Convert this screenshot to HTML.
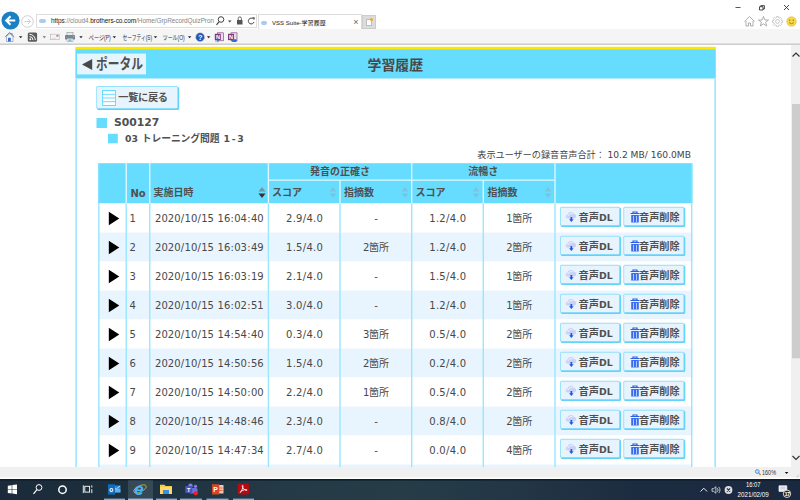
<!DOCTYPE html>
<html lang="ja"><head><meta charset="utf-8"><title>VSS Suite-学習履歴</title>
<style>
*{box-sizing:border-box;margin:0;padding:0}
html,body{width:800px;height:500px;overflow:hidden;background:#fff}
body{position:relative;font-family:"DejaVu Sans","Liberation Sans","Noto Sans CJK JP",sans-serif;color:#444;font-size:10px}
.a{position:absolute}
.t{position:absolute;white-space:nowrap;line-height:1}
.jp{font-family:"Liberation Sans","Noto Sans CJK JP",sans-serif}
.b{font-weight:bold;color:#505050}
.btn{position:absolute;background:#e8f5fe;border:1px solid #8fdcfa;border-radius:2px;box-shadow:1px 1px 0 #7fd6f7}
.cell{position:absolute;white-space:nowrap;line-height:1;font-size:10px;color:#484848;word-spacing:0.4px}
.s{margin:0 0.3px}
.p{margin:0 0.23px}
.ctr{text-align:center}
</style></head><body>

<svg class="a" style="left:0;top:0" width="800" height="500" viewBox="0 0 800 500">
<rect x="0" y="0" width="800" height="32" fill="#fff"/>
<rect x="0" y="29" width="800" height="14.5" fill="#f5f5f5"/>
<rect x="0" y="43.5" width="800" height="1.3" fill="#c2c2c2"/>
<rect x="75.400" y="46.800" width="640.400" height="2.500" fill="#ffe600"/>
<rect x="75.400" y="49.200" width="640.400" height="29.300" fill="#66dcff"/>
<rect x="75.300" y="78.500" width="1.700" height="388.500" fill="#a3e7ff"/>
<rect x="714.300" y="78.500" width="1.700" height="388.500" fill="#a3e7ff"/>
<rect x="77" y="53.600" width="69" height="20.800" fill="#e6f4fd"/>
<rect x="96.500" y="118" width="10.500" height="10" fill="#66dcff"/>
<rect x="108" y="133.800" width="9.800" height="9.500" fill="#66dcff"/>
<rect x="98.200" y="163.2" width="594.200" height="40.2" fill="#66dcff"/>
<rect x="125.55" y="163.2" width="1.4" height="40.2" fill="#dff6ff"/>
<rect x="149.05" y="163.2" width="1.4" height="40.2" fill="#dff6ff"/>
<rect x="267.7" y="163.2" width="1.4" height="40.2" fill="#dff6ff"/>
<rect x="339.3" y="180" width="1.4" height="23.4" fill="#dff6ff"/>
<rect x="411" y="163.2" width="1.4" height="40.2" fill="#dff6ff"/>
<rect x="482.6" y="180" width="1.4" height="23.4" fill="#dff6ff"/>
<rect x="554.3" y="163.2" width="1.4" height="40.2" fill="#dff6ff"/>
<rect x="268.400" y="179.500" width="286.600" height="1.3" fill="#dff6ff"/>
<rect x="98.200" y="203.5" width="594.200" height="29" fill="#fff"/>
<rect x="98.200" y="232.5" width="594.200" height="29" fill="#e9f5fe"/>
<rect x="98.200" y="261.5" width="594.200" height="29" fill="#fff"/>
<rect x="98.200" y="290.5" width="594.200" height="29" fill="#e9f5fe"/>
<rect x="98.200" y="319.5" width="594.200" height="29" fill="#fff"/>
<rect x="98.200" y="348.5" width="594.200" height="29" fill="#e9f5fe"/>
<rect x="98.200" y="377.5" width="594.200" height="29" fill="#fff"/>
<rect x="98.200" y="406.5" width="594.200" height="29" fill="#e9f5fe"/>
<rect x="98.200" y="435.5" width="594.200" height="29" fill="#fff"/>
<rect x="98.200" y="464.500" width="594.200" height="2.500" fill="#e9f5fe"/>
<rect x="98.15" y="203.4" width="1.4" height="263.6" fill="#9ae6ff"/>
<rect x="125.55" y="203.4" width="1.4" height="263.6" fill="#9ae6ff"/>
<rect x="149.05" y="203.4" width="1.4" height="263.6" fill="#9ae6ff"/>
<rect x="267.7" y="203.4" width="1.4" height="263.6" fill="#9ae6ff"/>
<rect x="339.3" y="203.4" width="1.4" height="263.6" fill="#9ae6ff"/>
<rect x="411" y="203.4" width="1.4" height="263.6" fill="#9ae6ff"/>
<rect x="482.6" y="203.4" width="1.4" height="263.6" fill="#9ae6ff"/>
<rect x="554.3" y="203.4" width="1.4" height="263.6" fill="#9ae6ff"/>
<rect x="691" y="203.4" width="1.4" height="263.6" fill="#9ae6ff"/>
<rect x="98.150" y="163.2" width="1.4" height="40.2" fill="#7fe1ff"/>
<rect x="691" y="163.2" width="1.4" height="40.2" fill="#7fe1ff"/>
<rect x="791" y="45" width="9" height="422" fill="#f0f0f0"/>
<rect x="792" y="104" width="8" height="254.300" fill="#cdcdcd"/>
<rect x="0" y="467" width="800" height="11" fill="#f0f0f0"/>
<rect x="0" y="477.500" width="800" height="1.500" fill="#ffffff"/>
</svg>
<svg class="a" style="left:0.5px;top:10.5px" width="19" height="19" viewBox="0 0 20 20"><circle cx="10" cy="10" r="9.5" fill="#1b7fc4"/><path d="M15 10H6M10 5.5L5.5 10L10 14.5" stroke="#fff" stroke-width="2.2" fill="none"/></svg>
<svg class="a" style="left:21px;top:15px" width="13" height="13" viewBox="0 0 13 13"><circle cx="6.5" cy="6.5" r="5.8" fill="#fff" stroke="#c4c4c4" stroke-width="0.8"/><path d="M3.5 6.5H9M7 4L9.5 6.5L7 9" stroke="#d0d0d0" stroke-width="1" fill="none"/></svg>
<div class="a" style="left:36px;top:14.300px;width:221px;height:13.400px;border:1px solid #dedede;background:#fff"></div>
<div class="a" style="left:39px;top:19px;width:7px;height:4px;border-radius:3px;background:#a9cbf2"></div>
<div class="t" style="left:51px;top:18.400px;font-size:6.45px;font-family:'Liberation Sans',sans-serif;color:#858585;letter-spacing:-0.05px"><span style="color:#222">https</span>://cloud4.<span style="color:#111">brothers-co.com</span>/Home/GrpRecordQuizPron</div>
<svg class="a" style="left:215px;top:15px" width="45" height="12" viewBox="0 0 45 12"><circle cx="6" cy="4.5" r="2.8" fill="none" stroke="#444" stroke-width="1"/><path d="M4 6.8L1.5 9.8" stroke="#444" stroke-width="1.2"/><path d="M13 5.5h3.5l-1.75 2z" fill="#444"/><rect x="22" y="5" width="5.5" height="4.5" fill="#555"/><path d="M23.2 5V3.5a1.6 1.6 0 0 1 3.2 0V5" fill="none" stroke="#555" stroke-width="0.9"/><path d="M38.5 4.2A2.9 2.9 0 1 0 39 7" fill="none" stroke="#444" stroke-width="1"/><path d="M37 2.2h2.6v2.6z" fill="#444"/></svg>
<div class="a" style="left:258px;top:14px;width:104px;height:15px;border:1px solid #dcdcdc;border-bottom:none;background:#fff"></div>
<div class="a" style="left:260.500px;top:20.500px;width:6.500px;height:4px;border-radius:3px;background:#a9cbf2"></div>
<div class="t jp" style="left:272px;top:19.700px;font-size:6.05px;color:#222">VSS Suite-学習履歴</div>
<div class="t" style="left:353.300px;top:18px;font-size:9px;color:#666;font-family:'Liberation Sans',sans-serif">×</div>
<div class="a" style="left:361.5px;top:15px;width:14px;height:13.5px;background:#dcdcdc;border:1px solid #cdcdcd"></div>
<div class="a" style="left:366px;top:19px;width:6px;height:7px;background:#fff;border:1px solid #bdbdbd"></div>
<div class="a" style="left:370px;top:18px;width:3px;height:3px;border-radius:2px;background:#f5a623"></div>
<svg class="a" style="left:730px;top:0" width="70" height="16" viewBox="0 0 70 16"><path d="M5.5 7.5h5" stroke="#444" stroke-width="0.9"/><path d="M29.500 6.700h3.500v3.300h-3.500z" fill="none" stroke="#222" stroke-width="0.800"/><path d="M30.800 6.700V5.600h3.600V9h-1.400" fill="none" stroke="#222" stroke-width="0.800"/><path d="M54 5l5 5M59 5l-5 5" stroke="#333" stroke-width="0.9"/></svg>
<svg class="a" style="left:743px;top:15px" width="56" height="13" viewBox="0 0 56 13"><path d="M1.5 6.5L6.5 1.5L11.5 6.5M3 6v5h2.5V8h2v3H10V6" fill="none" stroke="#9a9a9a" stroke-width="0.8"/><path d="M20.500 1.500L21.900 5h3.600l-2.900 2.300 1.100 3.700-3.200-2.200-3.200 2.200 1.100-3.700L15.500 5h3.600z" fill="none" stroke="#9a9a9a" stroke-width="0.8"/><path d="M38.25 5.42L39.53 5.64L39.53 7.36L38.25 7.58L37.91 8.39L38.66 9.44L37.44 10.66L36.39 9.91L35.58 10.25L35.36 11.53L33.64 11.53L33.42 10.25L32.61 9.91L31.56 10.66L30.34 9.44L31.09 8.39L30.75 7.58L29.47 7.36L29.47 5.64L30.75 5.42L31.09 4.61L30.34 3.56L31.56 2.34L32.61 3.09L33.42 2.75L33.64 1.47L35.36 1.47L35.58 2.75L36.39 3.09L37.44 2.34L38.66 3.56L37.91 4.61z" fill="none" stroke="#b3b3b3" stroke-width="0.7" stroke-linejoin="round"/><circle cx="34.500" cy="6.500" r="1.900" fill="none" stroke="#b3b3b3" stroke-width="0.700"/><circle cx="48.500" cy="6.500" r="4.800" fill="#f7d84a" stroke="#d8b52a" stroke-width="0.5"/><circle cx="46.800" cy="5.200" r="0.600" fill="#6b5a10"/><circle cx="50.200" cy="5.200" r="0.600" fill="#6b5a10"/><path d="M46 7.600q2.500 2.200 5 0" fill="none" stroke="#6b5a10" stroke-width="0.600"/></svg>
<svg class="a" style="left:0;top:28px" width="260" height="18" viewBox="0 28 260 18" font-family="Liberation Sans, Noto Sans CJK JP, sans-serif">
<path d="M5.300 36.800L9.700 32.600L14.200 36.800" fill="none" stroke="#5b6f8f" stroke-width="1"/><path d="M6.500 36.500v5h6.500v-5L9.700 33.600z" fill="#f3f6fb" stroke="#7d8da8" stroke-width="0.600"/><rect x="8" y="37.800" width="2.800" height="3.700" fill="#2f6fc4"/><rect x="11.300" y="33" width="1.200" height="2" fill="#7d8da8"/>
<path d="M19 36.300h3.400l-1.700 2z" fill="#222"/>
<rect x="27.800" y="32.500" width="9.300" height="9.300" rx="1.500" fill="#5a5a5a"/><circle cx="30.300" cy="39.300" r="0.950" fill="#fff"/><path d="M29.500 36.600a3.500 3.500 0 0 1 3.500 3.500M29.500 34.300a5.800 5.800 0 0 1 5.800 5.800" fill="none" stroke="#fff" stroke-width="1"/>
<path d="M42.6 36.300h3.400l-1.700 2z" fill="#777"/>
<rect x="50.500" y="34.200" width="8.700" height="5.500" fill="#f4f4f4" stroke="#b5b5b5" stroke-width="0.600"/><rect x="56.300" y="35" width="2.200" height="1.600" fill="#e26a6a"/><path d="M51.800 38.300h4" stroke="#ccc" stroke-width="0.600"/>
<rect x="67" y="32.700" width="6" height="3" fill="#e9edf1" stroke="#7c838b" stroke-width="0.500"/><rect x="65" y="35" width="10" height="4.600" rx="0.600" fill="#7f868e"/><rect x="67" y="38.300" width="6" height="3.200" fill="#fff" stroke="#7c838b" stroke-width="0.500"/><rect x="68.300" y="39.500" width="3.300" height="1.200" fill="#2aa7df"/><rect x="73" y="36" width="1" height="0.800" fill="#7fe07f"/>
<path d="M79.3 36.300h3.400l-1.700 2z" fill="#222"/>
<text x="88.800" y="40" font-size="6.800" fill="#333" textLength="22" lengthAdjust="spacingAndGlyphs">ページ(P)</text>
<path d="M112.6 36.300h3.400l-1.700 2z" fill="#222"/>
<text x="122.500" y="40" font-size="6.800" fill="#333" textLength="29.500" lengthAdjust="spacingAndGlyphs">セーフティ(S)</text>
<path d="M153.8 36.300h3.400l-1.700 2z" fill="#222"/>
<text x="162.700" y="40" font-size="6.800" fill="#333" textLength="22" lengthAdjust="spacingAndGlyphs">ツール(O)</text>
<path d="M187.9 36.300h3.400l-1.700 2z" fill="#222"/>
<circle cx="200.100" cy="37.200" r="4.400" fill="#1f57b8" stroke="#c9c2a8" stroke-width="0.500"/><text x="198.100" y="39.800" font-size="7.300" font-weight="bold" fill="#fff">?</text>
<path d="M206.9 36.300h3.400l-1.700 2z" fill="#222"/>
<rect x="217.500" y="32.800" width="6" height="8" fill="#e9d9ee" stroke="#80397b" stroke-width="0.600"/><rect x="214.800" y="33.800" width="6" height="6.300" fill="#80397b"/><text x="215.900" y="39.100" font-size="5.600" font-weight="bold" fill="#fff">N</text><path d="M215 41h3.500M217.500 40l1.200 1-1.200 1" stroke="#2b6fd0" stroke-width="0.700" fill="none"/>
<rect x="231" y="32.800" width="6" height="8" fill="#e9d9ee" stroke="#80397b" stroke-width="0.600"/><rect x="228" y="33.800" width="6" height="6.300" fill="#80397b"/><text x="229.100" y="39.100" font-size="5.600" font-weight="bold" fill="#fff">N</text><rect x="231.500" y="39.300" width="5.500" height="2.600" rx="1.300" fill="#2b6fd0"/>
</svg>
<svg class="a" style="left:81px;top:58px" width="12" height="13" viewBox="0 0 12 13"><path d="M11.200 0.900V12.100L1 6.500z" fill="#484848"/></svg>
<div class="t jp b" style="left:96px;top:57px;font-size:14.5px;transform:scaleX(0.81);transform-origin:0 0">ポータル</div>
<div class="t jp b" style="left:367.5px;top:58.5px;font-size:13.9px;color:#484848">学習履歴</div>
<svg class="a" style="left:95px;top:85px" width="87" height="27" viewBox="95 85 87 27"><rect x="97" y="86.9" width="82.2" height="23" rx="1.500" fill="#62d2f8"/><rect x="96.2" y="86.1" width="81.8" height="22.6" rx="1.500" fill="#93e0fb"/><rect x="97.1" y="87" width="80.1" height="20.9" rx="0.800" fill="#e8f4fd"/></svg>
<svg class="a" style="left:101.800px;top:90px" width="14" height="16" viewBox="0 0 14 16"><rect x="0.500" y="0.500" width="13" height="15" fill="#fff" stroke="#66dcff" stroke-width="1"/><path d="M0.500 4.300h13M0.500 8h13M0.500 11.700h13" stroke="#66dcff" stroke-width="1"/></svg>
<div class="t jp b" style="left:118.300px;top:93px;font-size:10.2px;letter-spacing:-0.3px">一覧に戻る</div>
<div class="t b" style="left:114px;top:117.800px;font-size:10.8px">S00127</div>
<div class="t b" style="left:125px;top:133.800px;font-size:9.3px">03</div>
<div class="t jp b" style="left:141.800px;top:134.100px;font-size:9.8px;letter-spacing:-0.1px">トレーニング問題</div>
<div class="t b" style="left:223.500px;top:133.800px;font-size:9.3px;letter-spacing:1.7px">1-3</div>
<div class="t jp" style="right:109px;top:150.800px;font-size:9.15px;color:#444">表示ユーザーの録音音声合計： <span style="font-family:'DejaVu Sans',sans-serif;font-size:9.15px">10.2 MB/ 160.0MB</span></div>
<div class="t jp b ctr" style="left:268.400px;width:143.300px;top:166.500px;font-size:10px">発音の正確さ</div>
<div class="t jp b ctr" style="left:411.700px;width:143.300px;top:166.500px;font-size:10px">流暢さ</div>
<div class="t b" style="left:130.500px;top:188.500px;font-size:10px">No</div>
<div class="t jp b" style="left:153.500px;top:188px;font-size:10px">実施日時</div>
<div class="t jp b" style="left:272px;top:188px;font-size:10px">スコア</div>
<div class="t jp b" style="left:344px;top:188px;font-size:10px">指摘数</div>
<div class="t jp b" style="left:415.500px;top:188px;font-size:10px">スコア</div>
<div class="t jp b" style="left:487.500px;top:188px;font-size:10px">指摘数</div>
<svg class="a" style="left:257.7px;top:186px" width="8" height="13" viewBox="0 0 8 13"><path d="M0.500 5.500L4 1L7.500 5.500z" fill="#6f9aa3"/><path d="M0.500 7.500L4 12L7.500 7.500z" fill="#333"/></svg>
<svg class="a" style="left:329px;top:186px" width="8" height="13" viewBox="0 0 8 13"><path d="M0.500 5.500L4 1L7.500 5.500z" fill="#7cc3de"/><path d="M0.500 7.500L4 12L7.500 7.500z" fill="#7cc3de"/></svg>
<svg class="a" style="left:400.7px;top:186px" width="8" height="13" viewBox="0 0 8 13"><path d="M0.500 5.500L4 1L7.500 5.500z" fill="#7cc3de"/><path d="M0.500 7.500L4 12L7.500 7.500z" fill="#7cc3de"/></svg>
<svg class="a" style="left:472.3px;top:186px" width="8" height="13" viewBox="0 0 8 13"><path d="M0.500 5.500L4 1L7.500 5.500z" fill="#7cc3de"/><path d="M0.500 7.500L4 12L7.500 7.500z" fill="#7cc3de"/></svg>
<svg class="a" style="left:544px;top:186px" width="8" height="13" viewBox="0 0 8 13"><path d="M0.500 5.500L4 1L7.500 5.500z" fill="#7cc3de"/><path d="M0.500 7.500L4 12L7.500 7.500z" fill="#7cc3de"/></svg>
<svg class="a" style="left:108px;top:210.5px" width="12" height="15" viewBox="0 0 12 15"><path d="M0.800 0.800V14.200L11.300 7.500z" fill="#000"/></svg>
<div class="cell" style="left:129.500px;top:214px">1</div>
<div class="cell" style="left:155.100px;top:214px">2020<span class="s">/</span>10<span class="s">/</span>15 16<span class="s">:</span>04<span class="s">:</span>40</div>
<div class="cell ctr" style="left:268.400px;width:72px;top:214px">2<span class="p">.</span>9<span class="s">/</span>4<span class="p">.</span>0</div>
<div class="cell ctr" style="left:340px;width:72px;top:214px">-</div>
<div class="cell ctr" style="left:411.700px;width:72px;top:214px">1<span class="p">.</span>2<span class="s">/</span>4<span class="p">.</span>0</div>
<div class="cell ctr" style="left:483.300px;width:72px;top:214px">1<span class="jp" style="font-size:10px;margin-left:-0.3px">箇所</span></div>
<svg class="a" style="left:559px;top:205px" width="65" height="24" viewBox="559 205 65 24"><rect x="560.8" y="207.6" width="60.2" height="19.4" rx="1.500" fill="#62d2f8"/><rect x="560" y="206.8" width="59.8" height="19" rx="1.500" fill="#93e0fb"/><rect x="560.9" y="207.7" width="58.1" height="17.3" rx="0.800" fill="#e8f4fd"/></svg>
<svg class="a" style="left:565px;top:211.5px" width="13" height="11" viewBox="0 0 13 11"><path d="M2.300 6.600a2.100 2.100 0 0 1 0.200-4.100a3.400 3.400 0 0 1 6.300-0.700a2.450 2.450 0 0 1 0.500 4.800z" fill="#c9d2f4"/><path d="M2.600 4.300a1.500 1.500 0 0 1 1.200-1.200a2.600 2.600 0 0 1 3.600-1.300" fill="none" stroke="#f4f6ff" stroke-width="0.900"/><path d="M5.500 5h1.700v2.200h1.400L6.350 9.900L4.100 7.200h1.400z" fill="#1f55ee"/></svg>
<div class="t jp b" style="left:578.500px;top:212.5px;font-size:10.3px">音声<span style="font-family:'DejaVu Sans',sans-serif;font-size:9.3px">DL</span></div>
<svg class="a" style="left:622px;top:205px" width="66" height="24" viewBox="622 205 66 24"><rect x="624.1" y="207.6" width="61.2" height="19.4" rx="1.500" fill="#62d2f8"/><rect x="623.3" y="206.8" width="60.8" height="19" rx="1.500" fill="#93e0fb"/><rect x="624.2" y="207.7" width="59.1" height="17.3" rx="0.800" fill="#e8f4fd"/></svg>
<svg class="a" style="left:629.500px;top:211.1px" width="10" height="12" viewBox="0 0 10 12"><path d="M0.500 2.500h9M3 2.500V1h4v1.500" stroke="#2a5fe8" stroke-width="1.200" fill="none"/><path d="M1.200 4h7.600v7.500H1.200z" fill="#3a6cf0"/><path d="M3.500 5v6M6.500 5v6" stroke="#cfe0ff" stroke-width="0.800"/></svg>
<div class="t jp b" style="left:639px;top:212.5px;font-size:10.2px">音声削除</div>
<svg class="a" style="left:108px;top:239.5px" width="12" height="15" viewBox="0 0 12 15"><path d="M0.800 0.800V14.200L11.300 7.500z" fill="#000"/></svg>
<div class="cell" style="left:129.500px;top:243px">2</div>
<div class="cell" style="left:155.100px;top:243px">2020<span class="s">/</span>10<span class="s">/</span>15 16<span class="s">:</span>03<span class="s">:</span>49</div>
<div class="cell ctr" style="left:268.400px;width:72px;top:243px">1<span class="p">.</span>5<span class="s">/</span>4<span class="p">.</span>0</div>
<div class="cell ctr" style="left:340px;width:72px;top:243px">2<span class="jp" style="font-size:10px;margin-left:-0.3px">箇所</span></div>
<div class="cell ctr" style="left:411.700px;width:72px;top:243px">1<span class="p">.</span>2<span class="s">/</span>4<span class="p">.</span>0</div>
<div class="cell ctr" style="left:483.300px;width:72px;top:243px">2<span class="jp" style="font-size:10px;margin-left:-0.3px">箇所</span></div>
<svg class="a" style="left:559px;top:234px" width="65" height="24" viewBox="559 234 65 24"><rect x="560.8" y="236.6" width="60.2" height="19.4" rx="1.500" fill="#62d2f8"/><rect x="560" y="235.8" width="59.8" height="19" rx="1.500" fill="#93e0fb"/><rect x="560.9" y="236.7" width="58.1" height="17.3" rx="0.800" fill="#e8f4fd"/></svg>
<svg class="a" style="left:565px;top:240.5px" width="13" height="11" viewBox="0 0 13 11"><path d="M2.300 6.600a2.100 2.100 0 0 1 0.200-4.100a3.400 3.400 0 0 1 6.300-0.700a2.450 2.450 0 0 1 0.500 4.800z" fill="#c9d2f4"/><path d="M2.600 4.300a1.500 1.500 0 0 1 1.200-1.200a2.600 2.600 0 0 1 3.600-1.300" fill="none" stroke="#f4f6ff" stroke-width="0.900"/><path d="M5.500 5h1.700v2.200h1.400L6.350 9.900L4.100 7.200h1.400z" fill="#1f55ee"/></svg>
<div class="t jp b" style="left:578.500px;top:241.5px;font-size:10.3px">音声<span style="font-family:'DejaVu Sans',sans-serif;font-size:9.3px">DL</span></div>
<svg class="a" style="left:622px;top:234px" width="66" height="24" viewBox="622 234 66 24"><rect x="624.1" y="236.6" width="61.2" height="19.4" rx="1.500" fill="#62d2f8"/><rect x="623.3" y="235.8" width="60.8" height="19" rx="1.500" fill="#93e0fb"/><rect x="624.2" y="236.7" width="59.1" height="17.3" rx="0.800" fill="#e8f4fd"/></svg>
<svg class="a" style="left:629.500px;top:240.1px" width="10" height="12" viewBox="0 0 10 12"><path d="M0.500 2.500h9M3 2.500V1h4v1.500" stroke="#2a5fe8" stroke-width="1.200" fill="none"/><path d="M1.200 4h7.600v7.500H1.200z" fill="#3a6cf0"/><path d="M3.500 5v6M6.500 5v6" stroke="#cfe0ff" stroke-width="0.800"/></svg>
<div class="t jp b" style="left:639px;top:241.5px;font-size:10.2px">音声削除</div>
<svg class="a" style="left:108px;top:268.5px" width="12" height="15" viewBox="0 0 12 15"><path d="M0.800 0.800V14.200L11.300 7.500z" fill="#000"/></svg>
<div class="cell" style="left:129.500px;top:272px">3</div>
<div class="cell" style="left:155.100px;top:272px">2020<span class="s">/</span>10<span class="s">/</span>15 16<span class="s">:</span>03<span class="s">:</span>19</div>
<div class="cell ctr" style="left:268.400px;width:72px;top:272px">2<span class="p">.</span>1<span class="s">/</span>4<span class="p">.</span>0</div>
<div class="cell ctr" style="left:340px;width:72px;top:272px">-</div>
<div class="cell ctr" style="left:411.700px;width:72px;top:272px">1<span class="p">.</span>5<span class="s">/</span>4<span class="p">.</span>0</div>
<div class="cell ctr" style="left:483.300px;width:72px;top:272px">1<span class="jp" style="font-size:10px;margin-left:-0.3px">箇所</span></div>
<svg class="a" style="left:559px;top:263px" width="65" height="24" viewBox="559 263 65 24"><rect x="560.8" y="265.6" width="60.2" height="19.4" rx="1.500" fill="#62d2f8"/><rect x="560" y="264.8" width="59.8" height="19" rx="1.500" fill="#93e0fb"/><rect x="560.9" y="265.7" width="58.1" height="17.3" rx="0.800" fill="#e8f4fd"/></svg>
<svg class="a" style="left:565px;top:269.5px" width="13" height="11" viewBox="0 0 13 11"><path d="M2.300 6.600a2.100 2.100 0 0 1 0.200-4.100a3.400 3.400 0 0 1 6.300-0.700a2.450 2.450 0 0 1 0.500 4.800z" fill="#c9d2f4"/><path d="M2.600 4.300a1.500 1.500 0 0 1 1.200-1.200a2.600 2.600 0 0 1 3.600-1.300" fill="none" stroke="#f4f6ff" stroke-width="0.900"/><path d="M5.500 5h1.700v2.200h1.400L6.350 9.900L4.100 7.200h1.400z" fill="#1f55ee"/></svg>
<div class="t jp b" style="left:578.500px;top:270.5px;font-size:10.3px">音声<span style="font-family:'DejaVu Sans',sans-serif;font-size:9.3px">DL</span></div>
<svg class="a" style="left:622px;top:263px" width="66" height="24" viewBox="622 263 66 24"><rect x="624.1" y="265.6" width="61.2" height="19.4" rx="1.500" fill="#62d2f8"/><rect x="623.3" y="264.8" width="60.8" height="19" rx="1.500" fill="#93e0fb"/><rect x="624.2" y="265.7" width="59.1" height="17.3" rx="0.800" fill="#e8f4fd"/></svg>
<svg class="a" style="left:629.500px;top:269.1px" width="10" height="12" viewBox="0 0 10 12"><path d="M0.500 2.500h9M3 2.500V1h4v1.500" stroke="#2a5fe8" stroke-width="1.200" fill="none"/><path d="M1.200 4h7.600v7.500H1.200z" fill="#3a6cf0"/><path d="M3.500 5v6M6.500 5v6" stroke="#cfe0ff" stroke-width="0.800"/></svg>
<div class="t jp b" style="left:639px;top:270.5px;font-size:10.2px">音声削除</div>
<svg class="a" style="left:108px;top:297.5px" width="12" height="15" viewBox="0 0 12 15"><path d="M0.800 0.800V14.200L11.300 7.500z" fill="#000"/></svg>
<div class="cell" style="left:129.500px;top:301px">4</div>
<div class="cell" style="left:155.100px;top:301px">2020<span class="s">/</span>10<span class="s">/</span>15 16<span class="s">:</span>02<span class="s">:</span>51</div>
<div class="cell ctr" style="left:268.400px;width:72px;top:301px">3<span class="p">.</span>0<span class="s">/</span>4<span class="p">.</span>0</div>
<div class="cell ctr" style="left:340px;width:72px;top:301px">-</div>
<div class="cell ctr" style="left:411.700px;width:72px;top:301px">1<span class="p">.</span>2<span class="s">/</span>4<span class="p">.</span>0</div>
<div class="cell ctr" style="left:483.300px;width:72px;top:301px">1<span class="jp" style="font-size:10px;margin-left:-0.3px">箇所</span></div>
<svg class="a" style="left:559px;top:292px" width="65" height="24" viewBox="559 292 65 24"><rect x="560.8" y="294.6" width="60.2" height="19.4" rx="1.500" fill="#62d2f8"/><rect x="560" y="293.8" width="59.8" height="19" rx="1.500" fill="#93e0fb"/><rect x="560.9" y="294.7" width="58.1" height="17.3" rx="0.800" fill="#e8f4fd"/></svg>
<svg class="a" style="left:565px;top:298.5px" width="13" height="11" viewBox="0 0 13 11"><path d="M2.300 6.600a2.100 2.100 0 0 1 0.200-4.100a3.400 3.400 0 0 1 6.300-0.700a2.450 2.450 0 0 1 0.500 4.800z" fill="#c9d2f4"/><path d="M2.600 4.300a1.500 1.500 0 0 1 1.200-1.200a2.600 2.600 0 0 1 3.600-1.300" fill="none" stroke="#f4f6ff" stroke-width="0.900"/><path d="M5.500 5h1.700v2.200h1.400L6.350 9.900L4.100 7.200h1.400z" fill="#1f55ee"/></svg>
<div class="t jp b" style="left:578.500px;top:299.5px;font-size:10.3px">音声<span style="font-family:'DejaVu Sans',sans-serif;font-size:9.3px">DL</span></div>
<svg class="a" style="left:622px;top:292px" width="66" height="24" viewBox="622 292 66 24"><rect x="624.1" y="294.6" width="61.2" height="19.4" rx="1.500" fill="#62d2f8"/><rect x="623.3" y="293.8" width="60.8" height="19" rx="1.500" fill="#93e0fb"/><rect x="624.2" y="294.7" width="59.1" height="17.3" rx="0.800" fill="#e8f4fd"/></svg>
<svg class="a" style="left:629.500px;top:298.1px" width="10" height="12" viewBox="0 0 10 12"><path d="M0.500 2.500h9M3 2.500V1h4v1.500" stroke="#2a5fe8" stroke-width="1.200" fill="none"/><path d="M1.200 4h7.600v7.500H1.200z" fill="#3a6cf0"/><path d="M3.500 5v6M6.500 5v6" stroke="#cfe0ff" stroke-width="0.800"/></svg>
<div class="t jp b" style="left:639px;top:299.5px;font-size:10.2px">音声削除</div>
<svg class="a" style="left:108px;top:326.5px" width="12" height="15" viewBox="0 0 12 15"><path d="M0.800 0.800V14.200L11.300 7.500z" fill="#000"/></svg>
<div class="cell" style="left:129.500px;top:330px">5</div>
<div class="cell" style="left:155.100px;top:330px">2020<span class="s">/</span>10<span class="s">/</span>15 14<span class="s">:</span>54<span class="s">:</span>40</div>
<div class="cell ctr" style="left:268.400px;width:72px;top:330px">0<span class="p">.</span>3<span class="s">/</span>4<span class="p">.</span>0</div>
<div class="cell ctr" style="left:340px;width:72px;top:330px">3<span class="jp" style="font-size:10px;margin-left:-0.3px">箇所</span></div>
<div class="cell ctr" style="left:411.700px;width:72px;top:330px">0<span class="p">.</span>5<span class="s">/</span>4<span class="p">.</span>0</div>
<div class="cell ctr" style="left:483.300px;width:72px;top:330px">2<span class="jp" style="font-size:10px;margin-left:-0.3px">箇所</span></div>
<svg class="a" style="left:559px;top:321px" width="65" height="24" viewBox="559 321 65 24"><rect x="560.8" y="323.6" width="60.2" height="19.4" rx="1.500" fill="#62d2f8"/><rect x="560" y="322.8" width="59.8" height="19" rx="1.500" fill="#93e0fb"/><rect x="560.9" y="323.7" width="58.1" height="17.3" rx="0.800" fill="#e8f4fd"/></svg>
<svg class="a" style="left:565px;top:327.5px" width="13" height="11" viewBox="0 0 13 11"><path d="M2.300 6.600a2.100 2.100 0 0 1 0.200-4.100a3.400 3.400 0 0 1 6.300-0.700a2.450 2.450 0 0 1 0.500 4.800z" fill="#c9d2f4"/><path d="M2.600 4.300a1.500 1.500 0 0 1 1.200-1.200a2.600 2.600 0 0 1 3.600-1.300" fill="none" stroke="#f4f6ff" stroke-width="0.900"/><path d="M5.500 5h1.700v2.200h1.400L6.350 9.900L4.100 7.200h1.400z" fill="#1f55ee"/></svg>
<div class="t jp b" style="left:578.500px;top:328.5px;font-size:10.3px">音声<span style="font-family:'DejaVu Sans',sans-serif;font-size:9.3px">DL</span></div>
<svg class="a" style="left:622px;top:321px" width="66" height="24" viewBox="622 321 66 24"><rect x="624.1" y="323.6" width="61.2" height="19.4" rx="1.500" fill="#62d2f8"/><rect x="623.3" y="322.8" width="60.8" height="19" rx="1.500" fill="#93e0fb"/><rect x="624.2" y="323.7" width="59.1" height="17.3" rx="0.800" fill="#e8f4fd"/></svg>
<svg class="a" style="left:629.500px;top:327.1px" width="10" height="12" viewBox="0 0 10 12"><path d="M0.500 2.500h9M3 2.500V1h4v1.500" stroke="#2a5fe8" stroke-width="1.200" fill="none"/><path d="M1.200 4h7.600v7.500H1.200z" fill="#3a6cf0"/><path d="M3.500 5v6M6.500 5v6" stroke="#cfe0ff" stroke-width="0.800"/></svg>
<div class="t jp b" style="left:639px;top:328.5px;font-size:10.2px">音声削除</div>
<svg class="a" style="left:108px;top:355.5px" width="12" height="15" viewBox="0 0 12 15"><path d="M0.800 0.800V14.200L11.300 7.500z" fill="#000"/></svg>
<div class="cell" style="left:129.500px;top:359px">6</div>
<div class="cell" style="left:155.100px;top:359px">2020<span class="s">/</span>10<span class="s">/</span>15 14<span class="s">:</span>50<span class="s">:</span>56</div>
<div class="cell ctr" style="left:268.400px;width:72px;top:359px">1<span class="p">.</span>5<span class="s">/</span>4<span class="p">.</span>0</div>
<div class="cell ctr" style="left:340px;width:72px;top:359px">2<span class="jp" style="font-size:10px;margin-left:-0.3px">箇所</span></div>
<div class="cell ctr" style="left:411.700px;width:72px;top:359px">0<span class="p">.</span>2<span class="s">/</span>4<span class="p">.</span>0</div>
<div class="cell ctr" style="left:483.300px;width:72px;top:359px">2<span class="jp" style="font-size:10px;margin-left:-0.3px">箇所</span></div>
<svg class="a" style="left:559px;top:350px" width="65" height="24" viewBox="559 350 65 24"><rect x="560.8" y="352.6" width="60.2" height="19.4" rx="1.500" fill="#62d2f8"/><rect x="560" y="351.8" width="59.8" height="19" rx="1.500" fill="#93e0fb"/><rect x="560.9" y="352.7" width="58.1" height="17.3" rx="0.800" fill="#e8f4fd"/></svg>
<svg class="a" style="left:565px;top:356.5px" width="13" height="11" viewBox="0 0 13 11"><path d="M2.300 6.600a2.100 2.100 0 0 1 0.200-4.100a3.400 3.400 0 0 1 6.300-0.700a2.450 2.450 0 0 1 0.500 4.800z" fill="#c9d2f4"/><path d="M2.600 4.300a1.500 1.500 0 0 1 1.200-1.200a2.600 2.600 0 0 1 3.600-1.300" fill="none" stroke="#f4f6ff" stroke-width="0.900"/><path d="M5.500 5h1.700v2.200h1.400L6.350 9.900L4.100 7.200h1.400z" fill="#1f55ee"/></svg>
<div class="t jp b" style="left:578.500px;top:357.5px;font-size:10.3px">音声<span style="font-family:'DejaVu Sans',sans-serif;font-size:9.3px">DL</span></div>
<svg class="a" style="left:622px;top:350px" width="66" height="24" viewBox="622 350 66 24"><rect x="624.1" y="352.6" width="61.2" height="19.4" rx="1.500" fill="#62d2f8"/><rect x="623.3" y="351.8" width="60.8" height="19" rx="1.500" fill="#93e0fb"/><rect x="624.2" y="352.7" width="59.1" height="17.3" rx="0.800" fill="#e8f4fd"/></svg>
<svg class="a" style="left:629.500px;top:356.1px" width="10" height="12" viewBox="0 0 10 12"><path d="M0.500 2.500h9M3 2.500V1h4v1.500" stroke="#2a5fe8" stroke-width="1.200" fill="none"/><path d="M1.200 4h7.600v7.500H1.200z" fill="#3a6cf0"/><path d="M3.500 5v6M6.500 5v6" stroke="#cfe0ff" stroke-width="0.800"/></svg>
<div class="t jp b" style="left:639px;top:357.5px;font-size:10.2px">音声削除</div>
<svg class="a" style="left:108px;top:384.5px" width="12" height="15" viewBox="0 0 12 15"><path d="M0.800 0.800V14.200L11.300 7.500z" fill="#000"/></svg>
<div class="cell" style="left:129.500px;top:388px">7</div>
<div class="cell" style="left:155.100px;top:388px">2020<span class="s">/</span>10<span class="s">/</span>15 14<span class="s">:</span>50<span class="s">:</span>00</div>
<div class="cell ctr" style="left:268.400px;width:72px;top:388px">2<span class="p">.</span>2<span class="s">/</span>4<span class="p">.</span>0</div>
<div class="cell ctr" style="left:340px;width:72px;top:388px">1<span class="jp" style="font-size:10px;margin-left:-0.3px">箇所</span></div>
<div class="cell ctr" style="left:411.700px;width:72px;top:388px">0<span class="p">.</span>5<span class="s">/</span>4<span class="p">.</span>0</div>
<div class="cell ctr" style="left:483.300px;width:72px;top:388px">2<span class="jp" style="font-size:10px;margin-left:-0.3px">箇所</span></div>
<svg class="a" style="left:559px;top:379px" width="65" height="24" viewBox="559 379 65 24"><rect x="560.8" y="381.6" width="60.2" height="19.4" rx="1.500" fill="#62d2f8"/><rect x="560" y="380.8" width="59.8" height="19" rx="1.500" fill="#93e0fb"/><rect x="560.9" y="381.7" width="58.1" height="17.3" rx="0.800" fill="#e8f4fd"/></svg>
<svg class="a" style="left:565px;top:385.5px" width="13" height="11" viewBox="0 0 13 11"><path d="M2.300 6.600a2.100 2.100 0 0 1 0.200-4.100a3.400 3.400 0 0 1 6.300-0.700a2.450 2.450 0 0 1 0.500 4.800z" fill="#c9d2f4"/><path d="M2.600 4.300a1.500 1.500 0 0 1 1.200-1.200a2.600 2.600 0 0 1 3.600-1.300" fill="none" stroke="#f4f6ff" stroke-width="0.900"/><path d="M5.500 5h1.700v2.200h1.400L6.350 9.900L4.100 7.200h1.400z" fill="#1f55ee"/></svg>
<div class="t jp b" style="left:578.500px;top:386.5px;font-size:10.3px">音声<span style="font-family:'DejaVu Sans',sans-serif;font-size:9.3px">DL</span></div>
<svg class="a" style="left:622px;top:379px" width="66" height="24" viewBox="622 379 66 24"><rect x="624.1" y="381.6" width="61.2" height="19.4" rx="1.500" fill="#62d2f8"/><rect x="623.3" y="380.8" width="60.8" height="19" rx="1.500" fill="#93e0fb"/><rect x="624.2" y="381.7" width="59.1" height="17.3" rx="0.800" fill="#e8f4fd"/></svg>
<svg class="a" style="left:629.500px;top:385.1px" width="10" height="12" viewBox="0 0 10 12"><path d="M0.500 2.500h9M3 2.500V1h4v1.500" stroke="#2a5fe8" stroke-width="1.200" fill="none"/><path d="M1.200 4h7.600v7.500H1.200z" fill="#3a6cf0"/><path d="M3.500 5v6M6.500 5v6" stroke="#cfe0ff" stroke-width="0.800"/></svg>
<div class="t jp b" style="left:639px;top:386.5px;font-size:10.2px">音声削除</div>
<svg class="a" style="left:108px;top:413.5px" width="12" height="15" viewBox="0 0 12 15"><path d="M0.800 0.800V14.200L11.300 7.500z" fill="#000"/></svg>
<div class="cell" style="left:129.500px;top:417px">8</div>
<div class="cell" style="left:155.100px;top:417px">2020<span class="s">/</span>10<span class="s">/</span>15 14<span class="s">:</span>48<span class="s">:</span>46</div>
<div class="cell ctr" style="left:268.400px;width:72px;top:417px">2<span class="p">.</span>3<span class="s">/</span>4<span class="p">.</span>0</div>
<div class="cell ctr" style="left:340px;width:72px;top:417px">-</div>
<div class="cell ctr" style="left:411.700px;width:72px;top:417px">0<span class="p">.</span>8<span class="s">/</span>4<span class="p">.</span>0</div>
<div class="cell ctr" style="left:483.300px;width:72px;top:417px">2<span class="jp" style="font-size:10px;margin-left:-0.3px">箇所</span></div>
<svg class="a" style="left:559px;top:408px" width="65" height="24" viewBox="559 408 65 24"><rect x="560.8" y="410.6" width="60.2" height="19.4" rx="1.500" fill="#62d2f8"/><rect x="560" y="409.8" width="59.8" height="19" rx="1.500" fill="#93e0fb"/><rect x="560.9" y="410.7" width="58.1" height="17.3" rx="0.800" fill="#e8f4fd"/></svg>
<svg class="a" style="left:565px;top:414.5px" width="13" height="11" viewBox="0 0 13 11"><path d="M2.300 6.600a2.100 2.100 0 0 1 0.200-4.100a3.400 3.400 0 0 1 6.300-0.700a2.450 2.450 0 0 1 0.500 4.800z" fill="#c9d2f4"/><path d="M2.600 4.300a1.500 1.500 0 0 1 1.200-1.200a2.600 2.600 0 0 1 3.600-1.300" fill="none" stroke="#f4f6ff" stroke-width="0.900"/><path d="M5.500 5h1.700v2.200h1.400L6.350 9.900L4.100 7.200h1.400z" fill="#1f55ee"/></svg>
<div class="t jp b" style="left:578.500px;top:415.5px;font-size:10.3px">音声<span style="font-family:'DejaVu Sans',sans-serif;font-size:9.3px">DL</span></div>
<svg class="a" style="left:622px;top:408px" width="66" height="24" viewBox="622 408 66 24"><rect x="624.1" y="410.6" width="61.2" height="19.4" rx="1.500" fill="#62d2f8"/><rect x="623.3" y="409.8" width="60.8" height="19" rx="1.500" fill="#93e0fb"/><rect x="624.2" y="410.7" width="59.1" height="17.3" rx="0.800" fill="#e8f4fd"/></svg>
<svg class="a" style="left:629.500px;top:414.1px" width="10" height="12" viewBox="0 0 10 12"><path d="M0.500 2.500h9M3 2.500V1h4v1.500" stroke="#2a5fe8" stroke-width="1.200" fill="none"/><path d="M1.200 4h7.600v7.500H1.200z" fill="#3a6cf0"/><path d="M3.500 5v6M6.500 5v6" stroke="#cfe0ff" stroke-width="0.800"/></svg>
<div class="t jp b" style="left:639px;top:415.5px;font-size:10.2px">音声削除</div>
<svg class="a" style="left:108px;top:442.5px" width="12" height="15" viewBox="0 0 12 15"><path d="M0.800 0.800V14.200L11.300 7.500z" fill="#000"/></svg>
<div class="cell" style="left:129.500px;top:446px">9</div>
<div class="cell" style="left:155.100px;top:446px">2020<span class="s">/</span>10<span class="s">/</span>15 14<span class="s">:</span>47<span class="s">:</span>34</div>
<div class="cell ctr" style="left:268.400px;width:72px;top:446px">2<span class="p">.</span>7<span class="s">/</span>4<span class="p">.</span>0</div>
<div class="cell ctr" style="left:340px;width:72px;top:446px">-</div>
<div class="cell ctr" style="left:411.700px;width:72px;top:446px">0<span class="p">.</span>0<span class="s">/</span>4<span class="p">.</span>0</div>
<div class="cell ctr" style="left:483.300px;width:72px;top:446px">4<span class="jp" style="font-size:10px;margin-left:-0.3px">箇所</span></div>
<svg class="a" style="left:559px;top:437px" width="65" height="24" viewBox="559 437 65 24"><rect x="560.8" y="439.6" width="60.2" height="19.4" rx="1.500" fill="#62d2f8"/><rect x="560" y="438.8" width="59.8" height="19" rx="1.500" fill="#93e0fb"/><rect x="560.9" y="439.7" width="58.1" height="17.3" rx="0.800" fill="#e8f4fd"/></svg>
<svg class="a" style="left:565px;top:443.5px" width="13" height="11" viewBox="0 0 13 11"><path d="M2.300 6.600a2.100 2.100 0 0 1 0.200-4.100a3.400 3.400 0 0 1 6.300-0.700a2.450 2.450 0 0 1 0.500 4.800z" fill="#c9d2f4"/><path d="M2.600 4.300a1.500 1.500 0 0 1 1.200-1.200a2.600 2.600 0 0 1 3.600-1.300" fill="none" stroke="#f4f6ff" stroke-width="0.900"/><path d="M5.500 5h1.700v2.200h1.400L6.350 9.900L4.100 7.200h1.400z" fill="#1f55ee"/></svg>
<div class="t jp b" style="left:578.500px;top:444.5px;font-size:10.3px">音声<span style="font-family:'DejaVu Sans',sans-serif;font-size:9.3px">DL</span></div>
<svg class="a" style="left:622px;top:437px" width="66" height="24" viewBox="622 437 66 24"><rect x="624.1" y="439.6" width="61.2" height="19.4" rx="1.500" fill="#62d2f8"/><rect x="623.3" y="438.8" width="60.8" height="19" rx="1.500" fill="#93e0fb"/><rect x="624.2" y="439.7" width="59.1" height="17.3" rx="0.800" fill="#e8f4fd"/></svg>
<svg class="a" style="left:629.500px;top:443.1px" width="10" height="12" viewBox="0 0 10 12"><path d="M0.500 2.500h9M3 2.500V1h4v1.500" stroke="#2a5fe8" stroke-width="1.200" fill="none"/><path d="M1.200 4h7.600v7.500H1.200z" fill="#3a6cf0"/><path d="M3.500 5v6M6.500 5v6" stroke="#cfe0ff" stroke-width="0.800"/></svg>
<div class="t jp b" style="left:639px;top:444.5px;font-size:10.2px">音声削除</div>
<svg class="a" style="left:791px;top:45px" width="9" height="20" viewBox="0 0 9 20"><path d="M1.500 11.500L5 8L8.500 11.500" fill="none" stroke="#333" stroke-width="1.200"/></svg>
<svg class="a" style="left:791px;top:449px" width="9" height="19" viewBox="0 0 9 19"><path d="M1.500 7L5 10.500L8.500 7" fill="none" stroke="#333" stroke-width="1.200"/></svg>
<svg class="a" style="left:0;top:466px" width="800" height="34" viewBox="0 466 800 34" font-family="Liberation Sans, sans-serif">
<defs><linearGradient id="tbg" x1="0" y1="0" x2="1" y2="0"><stop offset="0" stop-color="#1a2a3a"/><stop offset="0.15" stop-color="#1d2f3d"/><stop offset="0.35" stop-color="#243a46"/><stop offset="0.5" stop-color="#263d48"/><stop offset="0.65" stop-color="#223645"/><stop offset="0.8" stop-color="#1c2c40"/><stop offset="1" stop-color="#1a2840"/></linearGradient></defs>
<rect x="0" y="479" width="800" height="21" fill="url(#tbg)"/><rect x="0" y="479" width="800" height="1.600" fill="#101f2b"/>
<circle cx="757.300" cy="471.500" r="1.900" fill="#bfe0f5" stroke="#3f7fd0" stroke-width="0.800"/><path d="M758.700 473L760.600 475" stroke="#c58a3a" stroke-width="1.200"/>
<text x="762" y="475.300" font-size="6.600" fill="#333" textLength="14" lengthAdjust="spacingAndGlyphs">160%</text>
<path d="M784.800 472h3.600l-1.800 2.100z" fill="#111"/>
<path d="M799 474.500l-3 3M799 476.300l-1.300 1.300" stroke="#bbb" stroke-width="0.700"/>
<path d="M7.800 485.700l3.900-0.550v3.850H7.800zM12.300 485.050l4.700-0.650v4.600h-4.700zM7.800 489.600h3.900v3.850l-3.900-0.550zM12.300 489.600h4.700v4.600l-4.700-0.650z" fill="#fff"/>
<circle cx="39" cy="487.500" r="2.900" fill="none" stroke="#fff" stroke-width="1"/><path d="M37 489.700L33.500 493.800" stroke="#fff" stroke-width="1.200"/>
<circle cx="62.500" cy="489.700" r="3.700" fill="none" stroke="#fff" stroke-width="1.500"/>
<rect x="84.800" y="486.300" width="4.800" height="5.800" fill="none" stroke="#fff" stroke-width="0.900"/><path d="M83.300 485.300v7.800M91.800 485.300v2.300M91.800 489.200v3.900" stroke="#fff" stroke-width="0.900"/>
<rect x="112" y="485.500" width="8.500" height="7" fill="#2a8ad8"/><path d="M112.500 486l3.800 3 3.800-3" fill="none" stroke="#cfe6fa" stroke-width="0.800"/><rect x="113.500" y="489" width="7" height="3.500" fill="#9fd0f5" opacity="0.500"/><rect x="108" y="484.300" width="7" height="10.200" fill="#0f6cbd"/>
<text x="109.300" y="491.700" font-size="6.500" font-weight="bold" fill="#fff">o</text>
<rect x="128" y="480.300" width="25" height="19.700" fill="#364957"/>
<ellipse cx="140" cy="488.800" rx="6.800" ry="3" fill="none" stroke="#e8c230" stroke-width="0.700" transform="rotate(-25 140 488.800)"/>
<text x="134.300" y="494.600" font-size="17" font-weight="bold" font-style="italic" fill="#45b6f5">e</text>
<path d="M160 484.800h4.500l1 1.200h6.500v8H160z" fill="#f7c948"/><rect x="160" y="487" width="12" height="7" fill="#fbd96a"/><rect x="163" y="490" width="6" height="4" fill="#3b8de0"/>
<circle cx="190.500" cy="485.800" r="2.200" fill="#7b83eb"/><circle cx="195.500" cy="486.300" r="1.600" fill="#7b83eb"/><rect x="189" y="488" width="8.500" height="5.500" rx="1.500" fill="#6a72d9"/><rect x="185.200" y="486" width="7" height="7" rx="0.800" fill="#4b53bc"/><text x="187" y="491.800" font-size="5.500" font-weight="bold" fill="#fff">T</text><circle cx="195.800" cy="493.300" r="2.100" fill="#e8212d"/>
<rect x="216" y="485" width="7.500" height="8.500" fill="#f4c3b3"/><path d="M217 488h5.500M217 490.500h5.500" stroke="#d24726" stroke-width="0.700"/><rect x="212" y="484.200" width="7.200" height="10.300" fill="#d24726"/><text x="213.300" y="491.900" font-size="6.800" font-weight="bold" fill="#fff">P</text>
<rect x="237.700" y="483.600" width="11.300" height="11" rx="1.300" fill="#b30b12"/><path d="M240 492.500c2-1.800 3-5 3-6.500c0-1-1.100-0.800-0.800 0.400c0.500 2 2.600 4 4.300 4c1 0 0.800-0.900-0.400-0.900c-1.900 0-4.600 1.200-6.100 3z" fill="none" stroke="#fff" stroke-width="0.850"/>
<rect x="104" y="498.600" width="21" height="1.400" fill="#7fb1dd"/>
<rect x="128" y="498.600" width="25" height="1.400" fill="#9cc8ee"/>
<rect x="156" y="498.600" width="21" height="1.400" fill="#7fb1dd"/>
<rect x="180" y="498.600" width="22" height="1.400" fill="#7fb1dd"/>
<rect x="206.5" y="498.600" width="22" height="1.400" fill="#7fb1dd"/>
<rect x="233" y="498.600" width="21" height="1.400" fill="#7fb1dd"/>
<path d="M700.500 491.500L703.800 488.200L707.100 491.500" fill="none" stroke="#fff" stroke-width="0.900"/>
<path d="M712 488.700h1.700l2.200-2v6.600l-2.200-2H712z" fill="none" stroke="#fff" stroke-width="0.700"/><path d="M717.300 488.200a2.600 2.600 0 0 1 0 3.600M718.700 486.900a4.400 4.400 0 0 1 0 6.200" fill="none" stroke="#fff" stroke-width="0.700"/>
<circle cx="728.500" cy="490" r="3.900" fill="#d9dce0"/><path d="M726.900 488.400l3.200 3.200M730.100 488.400l-3.200 3.200" stroke="#1c2b3d" stroke-width="1.100"/>
<text x="746" y="487" font-size="6.600" fill="#fff" textLength="14.600" lengthAdjust="spacingAndGlyphs">16:07</text>
<text x="737.500" y="496.700" font-size="6.600" fill="#fff" textLength="31.300" lengthAdjust="spacingAndGlyphs">2021/02/09</text>
<path d="M779 485.800h7.800v5.600h-7.800z" fill="#e8ecf0" stroke="#fff" stroke-width="0.700"/><path d="M780.300 487.300h5M780.300 488.800h5" stroke="#aab" stroke-width="0.500"/>
<circle cx="787" cy="493.800" r="3.700" fill="#222" stroke="#fff" stroke-width="0.800"/>
<text x="784.400" y="495.800" font-size="5.600" font-weight="bold" fill="#fff" letter-spacing="-0.400">17</text>
</svg>
</body></html>
